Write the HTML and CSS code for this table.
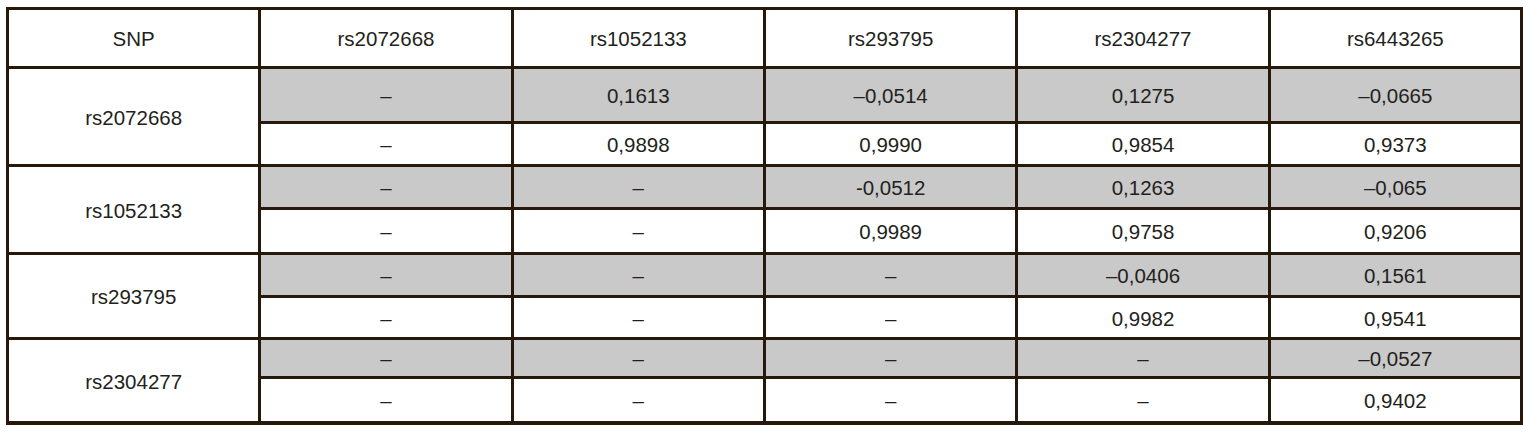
FILE: index.html
```html
<!DOCTYPE html>
<html>
<head>
<meta charset="utf-8">
<link rel="stylesheet" href="styles.css">
</head>
<body>
<div class="ld-table">
  <div class="cell head">SNP</div>
  <div class="cell head">rs2072668</div>
  <div class="cell head">rs1052133</div>
  <div class="cell head">rs293795</div>
  <div class="cell head">rs2304277</div>
  <div class="cell head">rs6443265</div>

  <div class="cell snp r1">rs2072668</div>
  <div class="cell g">–</div>
  <div class="cell g">0,1613</div>
  <div class="cell g">–0,0514</div>
  <div class="cell g">0,1275</div>
  <div class="cell g">–0,0665</div>
  <div class="cell">–</div>
  <div class="cell">0,9898</div>
  <div class="cell">0,9990</div>
  <div class="cell">0,9854</div>
  <div class="cell">0,9373</div>

  <div class="cell snp r2">rs1052133</div>
  <div class="cell g">–</div>
  <div class="cell g">–</div>
  <div class="cell g">-0,0512</div>
  <div class="cell g">0,1263</div>
  <div class="cell g">–0,065</div>
  <div class="cell">–</div>
  <div class="cell">–</div>
  <div class="cell">0,9989</div>
  <div class="cell">0,9758</div>
  <div class="cell">0,9206</div>

  <div class="cell snp r3">rs293795</div>
  <div class="cell g">–</div>
  <div class="cell g">–</div>
  <div class="cell g">–</div>
  <div class="cell g">–0,0406</div>
  <div class="cell g">0,1561</div>
  <div class="cell">–</div>
  <div class="cell">–</div>
  <div class="cell">–</div>
  <div class="cell">0,9982</div>
  <div class="cell">0,9541</div>

  <div class="cell snp r4">rs2304277</div>
  <div class="cell g">–</div>
  <div class="cell g">–</div>
  <div class="cell g">–</div>
  <div class="cell g">–</div>
  <div class="cell g">–0,0527</div>
  <div class="cell">–</div>
  <div class="cell">–</div>
  <div class="cell">–</div>
  <div class="cell">–</div>
  <div class="cell">0,9402</div>
</div>
</body>
</html>
```
FILE: styles.css
```css
html, body {
  margin: 0;
  padding: 0;
  background: #ffffff;
}
body {
  padding: 7px 0 0 6px;
}
.ld-table {
  width: 1517px;
  box-sizing: border-box;
  background: #26180a;
  padding: 3px 3px 4px 3px;
  display: grid;
  grid-template-columns: repeat(6, 1fr);
  grid-template-rows: 56px 52px 40px 40px 42px 40px 39px 36px 42px;
  gap: 3px;
  font-family: "Liberation Sans", Arial, sans-serif;
  font-size: 20.5px;
  color: #231f20;
}
.cell {
  background: #ffffff;
  display: flex;
  align-items: center;
  justify-content: center;
  min-width: 0;
  padding-top: 2px;
  box-sizing: border-box;
}
.cell.g {
  background: #c9c9c9;
}
.snp {
  grid-column: 1;
  grid-row: span 2;
}
.r1 { grid-row: 2 / span 2; }
.r2 { grid-row: 4 / span 2; }
.r3 { grid-row: 6 / span 2; }
.r4 { grid-row: 8 / span 2; }
```
